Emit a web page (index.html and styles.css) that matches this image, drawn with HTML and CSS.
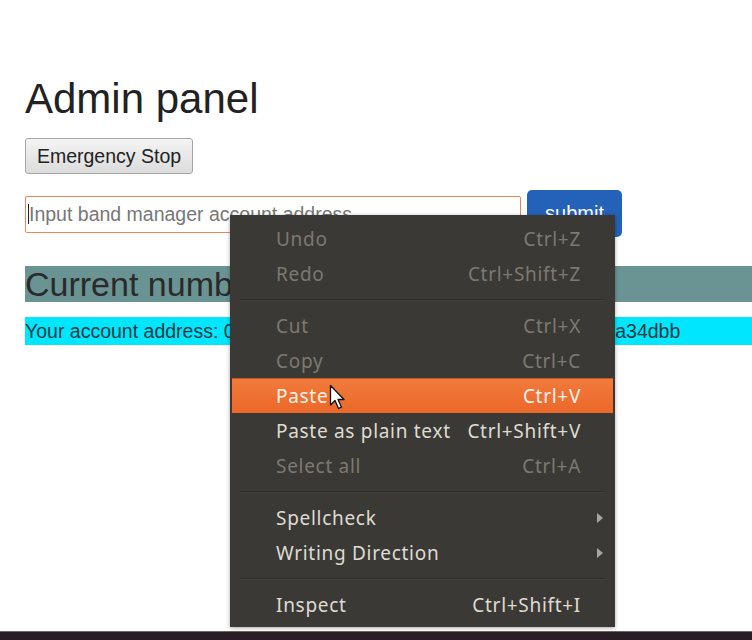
FILE: index.html
```html
<!DOCTYPE html>
<html lang="en">
<head>
    <meta charset="UTF-8">
    <meta name="viewport" content="width=device-width, initial-scale=1.0">
    <link rel="stylesheet" href="styles.css">
    <title>Admin panel</title>
</head>
<body>
    <div id="page">
        <h1 class="title">Admin panel</h1>
        <button class="stop-button">Emergency Stop</button>

        <div class="manager-form">
            <div class="input-wrap">
                <input type="text" class="manager-input" placeholder="Input band manager account address">
            </div>
            <button class="submit-button">submit</button>
        </div>

        <h2 class="current-number">Current number of bands: 3</h2>
        <p class="account">Your account address: 0x3f1c07e82b9d56a41e7cf0285b6d9e4c17f5a34dbb</p>
    </div>

    <div id="taskbar"></div>

    <!-- right click menu -->
    <div id="context-menu">
        <div class="menu-item disabled"><span>Undo</span><span class="shortcut">Ctrl+Z</span></div>
        <div class="menu-item disabled"><span>Redo</span><span class="shortcut">Ctrl+Shift+Z</span></div>
        <div class="separator"></div>
        <div class="menu-item disabled"><span>Cut</span><span class="shortcut">Ctrl+X</span></div>
        <div class="menu-item disabled"><span>Copy</span><span class="shortcut">Ctrl+C</span></div>
        <div class="menu-item active"><span>Paste</span><span class="shortcut">Ctrl+V</span></div>
        <div class="menu-item"><span>Paste as plain text</span><span class="shortcut">Ctrl+Shift+V</span></div>
        <div class="menu-item disabled"><span>Select all</span><span class="shortcut">Ctrl+A</span></div>
        <div class="separator"></div>
        <div class="menu-item"><span>Spellcheck</span><span class="shortcut"></span><span class="arrow"></span></div>
        <div class="menu-item"><span>Writing Direction</span><span class="shortcut"></span><span class="arrow"></span></div>
        <div class="separator"></div>
        <div class="menu-item"><span>Inspect</span><span class="shortcut">Ctrl+Shift+I</span></div>
    </div>

    <svg class="cursor" width="18" height="27" viewBox="0 0 18 27">
        <path d="M1.5 1.5 L1.5 21 L6 16.5 L9.5 24.5 L12.5 23.2 L9 15.5 L15 15.5 Z" fill="#fff" stroke="#111" stroke-width="1.3" stroke-linejoin="round"/>
    </svg>
</body>
</html>
```

FILE: styles.css
```css
html, body {
    margin: 0;
    padding: 0;
}

body {
    font-family: "Liberation Sans", Arial, sans-serif;
    background-color: #fff;
    color: #222;
    height: 640px;
    overflow: hidden;
    display: flex;
    flex-direction: column;
}

#page {
    flex: 1;
    padding: 75px 0 0 25px;
    display: flex;
    flex-direction: column;
    align-items: flex-start;
}

.title {
    margin: 0;
    font-size: 42px;
    line-height: 48px;
    font-weight: normal;
    color: #222;
}

.stop-button {
    margin-top: 15px;
    width: 168px;
    height: 36px;
    font-family: "Liberation Sans", Arial, sans-serif;
    font-size: 19.5px;
    color: #222;
    background: linear-gradient(#f4f4f4, #dcdcdc);
    border: 1px solid #a6a6a6;
    border-radius: 3px;
    padding: 0;
}

.manager-form {
    margin-top: 16px;
    display: flex;
    align-items: center;
    gap: 6px;
}

.input-wrap {
    position: relative;
}

.input-wrap::before {
    content: "";
    position: absolute;
    left: 3px;
    top: 9px;
    width: 1px;
    height: 20px;
    background: #222;
}

.manager-input {
    box-sizing: border-box;
    width: 496px;
    height: 37px;
    margin-top: 1px;
    padding: 0 0 0 3px;
    font-family: "Liberation Sans", Arial, sans-serif;
    font-size: 19.5px;
    border: 1.5px solid #e8875c;
    border-radius: 2px;
    outline: none;
    background: #fff;
}

.manager-input::placeholder {
    color: #777;
}

.submit-button {
    width: 95px;
    height: 47px;
    padding: 0;
    font-family: "Liberation Sans", Arial, sans-serif;
    font-size: 20px;
    color: #fff;
    background-color: #2461b8;
    border: none;
    border-radius: 5px;
}

.current-number {
    align-self: stretch;
    margin: 29px 0 0 0;
    height: 36px;
    font-size: 34px;
    line-height: 36px;
    font-weight: normal;
    color: #2a2a2a;
    background-color: #6a9494;
}

.account {
    align-self: stretch;
    margin: 15px 0 0 0;
    height: 28px;
    font-size: 19.5px;
    line-height: 28px;
    color: #173a40;
    background-color: #00e6ff;
    white-space: nowrap;
}

#taskbar {
    height: 8px;
    background-color: #2a1e26;
    border-top: 1px solid #6b6468;
}

#context-menu {
    position: absolute;
    left: 230px;
    top: 215px;
    width: 385px;
    height: 412px;
    box-sizing: border-box;
    padding-top: 6px;
    background-color: #3a3935;
    box-shadow: 0 1px 4px rgba(0, 0, 0, 0.35);
    font-family: "Noto Sans", "Open Sans", sans-serif;
    font-size: 19px;
    letter-spacing: 0.7px;
}

.menu-item {
    display: grid;
    grid-template-columns: 1fr auto 22px;
    align-items: center;
    height: 35px;
    margin: 0 2px;
    padding: 0 10px 0 44px;
    color: #dfdbd2;
}

.menu-item.disabled {
    color: #7c7972;
}

.menu-item.active {
    box-sizing: border-box;
    color: #fff3ea;
    background: linear-gradient(#f07a3c, #eb6829);
    border-top: 1px solid #c9581f;
}

.shortcut {
    text-align: right;
}

.arrow {
    justify-self: end;
    width: 0;
    height: 0;
    border-top: 5px solid transparent;
    border-bottom: 5px solid transparent;
    border-left: 6px solid #a9a59d;
}

.separator {
    height: 17px;
    margin: 0 10px;
    background: linear-gradient(transparent 8px, #2f2e2b 8px, #2f2e2b 9px, #42413c 9px, #42413c 10px, transparent 10px);
}

.cursor {
    position: absolute;
    left: 329px;
    top: 384px;
}
```
